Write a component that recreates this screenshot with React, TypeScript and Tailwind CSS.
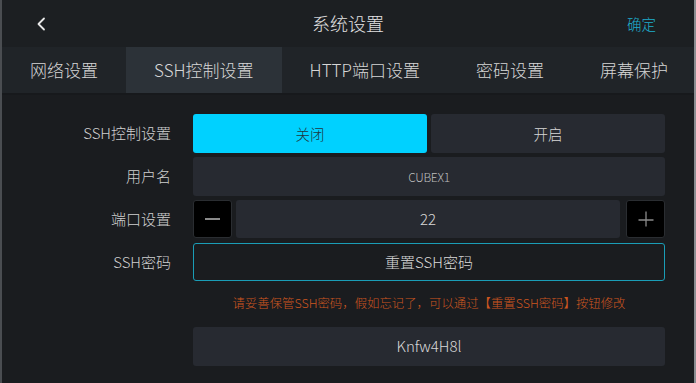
import React, { useState } from "react";

const tabs = ["网络设置", "SSH控制设置", "HTTP端口设置", "密码设置", "屏幕保护"];

export default function App() {
  const [active, setActive] = useState(1);
  const [sshOn, setSshOn] = useState(false);
  const [port, setPort] = useState(22);

  return (
    <div
      className="w-[696px] h-[383px] overflow-hidden bg-[#1a1c1f] border-l-2 border-l-[#4a4d51] border-r-2 border-r-[#8a8d91] flex flex-col font-light"
      style={{ fontFamily: '"Noto Sans CJK SC", "Noto Sans", sans-serif' }}
    >
      {/* Header */}
      <div className="h-[47px] shrink-0 bg-[#1c1f22] flex items-center relative">
        <button className="ml-[32px] w-[14px] h-[20px] flex items-center justify-center">
          <svg width="10" height="14" viewBox="0 0 10 14" fill="none">
            <path d="M8 1.5L2.5 7L8 12.5" stroke="#e8e8e8" strokeWidth="1.8" strokeLinecap="round" strokeLinejoin="round" />
          </svg>
        </button>
        <div className="absolute left-0 right-0 text-center text-[18px] text-[#e2e2e2] pointer-events-none">系统设置</div>
        <button className="ml-auto mr-[38px] text-[14.5px] text-[#1eaecd]">确定</button>
      </div>

      {/* Tabs */}
      <div className="h-[48px] shrink-0 bg-[#202428] flex border-b-2 border-b-[#17191c]">
        {tabs.map((t, i) => (
          <button
            key={t}
            onClick={() => setActive(i)}
            className={
              "px-[28px] text-[17px] text-[#d6d6d6] whitespace-nowrap " +
              (i === active ? "bg-[#2c3238]" : "")
            }
          >
            {t}
          </button>
        ))}
      </div>

      {/* Content */}
      <div className="pt-[19px] pr-[29px] grid grid-cols-[169px_1fr] gap-x-[22px] items-center text-[#cfcfcf]">
        <div className="text-right text-[15px]">SSH控制设置</div>
        <div className="flex gap-[4px] h-[39px]">
          <button
            onClick={() => setSshOn(false)}
            className={
              "flex-1 rounded-[3px] text-[14.5px] " +
              (!sshOn ? "bg-[#00d1ff] text-[#1f3540]" : "bg-[#272a31] text-[#d8d8d8]")
            }
          >
            关闭
          </button>
          <button
            onClick={() => setSshOn(true)}
            className={
              "flex-1 rounded-[3px] text-[14.5px] " +
              (sshOn ? "bg-[#00d1ff] text-[#1f3540]" : "bg-[#272a31] text-[#d8d8d8]")
            }
          >
            开启
          </button>
        </div>

        <div className="text-right text-[15px] mt-[4px]">用户名</div>
        <div className="mt-[4px] h-[39px] rounded-[3px] bg-[#272a31] flex items-center justify-center text-[12px] text-[#bdbdbd] tracking-[-0.3px]">
          CUBEX1
        </div>

        <div className="text-right text-[15px] mt-[4px]">端口设置</div>
        <div className="mt-[4px] h-[38px] flex gap-[4px]">
          <button
            onClick={() => setPort(port - 1)}
            className="w-[39px] rounded-[3px] bg-black border border-[#2a2d31] flex items-center justify-center"
          >
            <span className="block w-[15px] h-[1.5px] bg-[#8a8a8a]" />
          </button>
          <div className="flex-1 rounded-[3px] bg-[#272a31] flex items-center justify-center text-[15px] text-[#d8d8d8]">
            {port}
          </div>
          <button
            onClick={() => setPort(port + 1)}
            className="w-[39px] ml-[2px] rounded-[3px] bg-black border border-[#2a2d31] flex items-center justify-center"
          >
            <svg width="18" height="18" viewBox="0 0 18 18">
              <path d="M9 1.5V16.5M1.5 10H16.5" stroke="#8a8a8a" strokeWidth="1.3" />
            </svg>
          </button>
        </div>

        <div className="text-right text-[15px] mt-[5px]">SSH密码</div>
        <button className="mt-[5px] h-[38px] rounded-[3px] border border-[#1a9db6] text-[15px] text-[#d8d8d8]">
          重置SSH密码
        </button>

        <div />
        <div className="mt-[13px] text-center text-[12.4px] text-[#cc561f] whitespace-nowrap">
          请妥善保管SSH密码，假如忘记了，可以通过【重置SSH密码】按钮修改
        </div>

        <div />
        <div className="mt-[14px] h-[39px] rounded-[3px] bg-[#272a31] flex items-center justify-center text-[15px] text-[#d8d8d8]">
          Knfw4H8l
        </div>
      </div>
    </div>
  );
}
